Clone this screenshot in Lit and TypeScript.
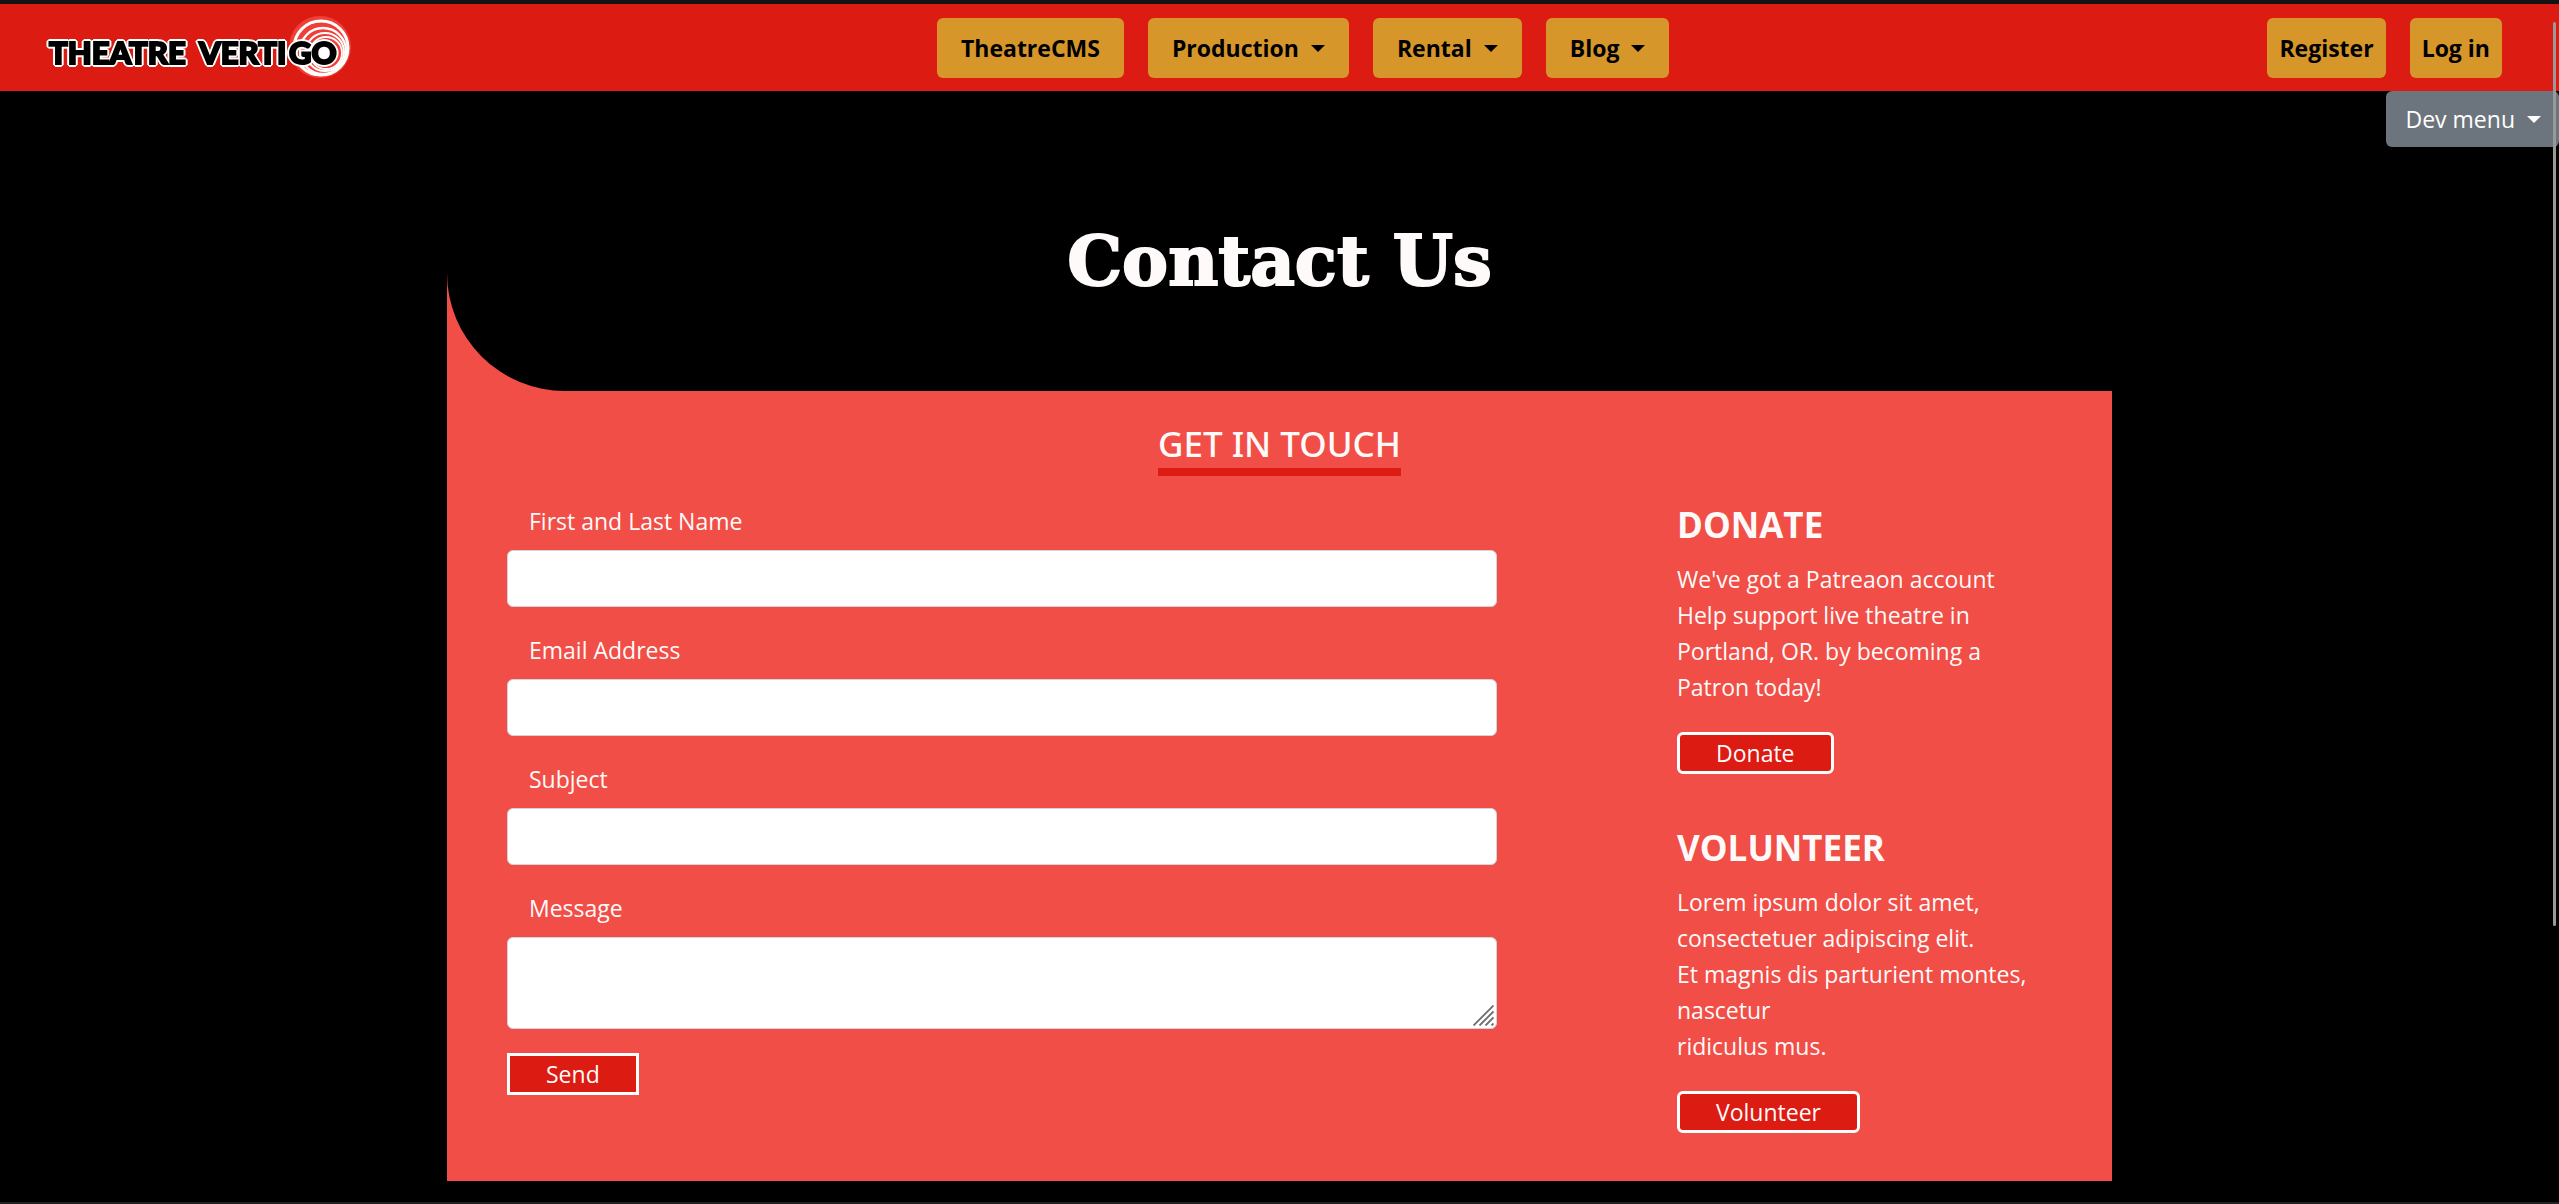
import { LitElement, html, css } from "lit";
import { customElement } from "lit/decorators.js";

const NAV_ITEMS = [
  { label: "TheatreCMS", menu: false },
  { label: "Production", menu: true },
  { label: "Rental", menu: true },
  { label: "Blog", menu: true },
];

const FIELDS = [
  { id: "name", label: "First and Last Name", type: "text" },
  { id: "email", label: "Email Address", type: "email" },
  { id: "subject", label: "Subject", type: "text" },
];

@customElement("theatre-logo")
export class TheatreLogo extends LitElement {
  static styles = css`
    :host {
      display: block;
      width: 291px;
      height: 60px;
    }
    .art {
      display: block;
      width: 304px;
      height: 60px;
      overflow: visible;
    }
    .word {
      font: 900 31px Lato, "Liberation Sans", sans-serif;
      fill: #000;
      stroke: #000;
      stroke-width: 2px;
      filter: drop-shadow(1px 1px 0 #fff) drop-shadow(-1px -1px 0 #fff) drop-shadow(1px -1px 0 #fff) drop-shadow(-1px 1px 0 #fff);
    }
  `;

  render() {
    return html`
      <svg class="art" viewBox="0 0 304 60" role="img" aria-label="Theatre Vertigo">
        <circle cx="272" cy="29" r="31" fill="#ef3f36" />
        <g fill="none" stroke="#fff">
          <circle cx="273" cy="30" r="27" stroke-width="3" />
          <circle cx="275" cy="33" r="23" stroke-width="2.4" />
          <circle cx="277" cy="34" r="19" stroke-width="2" />
          <circle cx="278" cy="35" r="16" stroke-width="1.8" />
        </g>
        <circle cx="279" cy="35" r="9" fill="#fff" />
        <text class="word" x="1" y="46">THEATRE</text>
        <text class="word" x="151" y="46">VERTI<tspan x="241">GO</tspan></text>
      </svg>
    `;
  }
}

@customElement("app-root")
export class AppRoot extends LitElement {
  static styles = css`
    :host {
      display: block;
      position: relative;
      box-sizing: border-box;
      min-height: 100vh;
      padding-bottom: 21px;
      border-top: 4px solid #131313;
      border-bottom: 2px solid #222;
      background: #000;
      color: #fffafa;
      font: 23px/36px "Open Sans", "Noto Sans", sans-serif;
    }
    * {
      box-sizing: border-box;
    }
    h1, h2, h3, p {
      margin: 0;
    }
    button, input, textarea {
      font: inherit;
      color: inherit;
      margin: 0;
    }
    button {
      cursor: pointer;
    }
    a {
      text-decoration: none;
      color: inherit;
    }
    .bar {
      display: flex;
      align-items: center;
      justify-content: space-between;
      padding: 14px 57px 13px 48px;
      background: #dc1b12;
    }
    .group {
      display: flex;
      gap: 24px;
    }
    .pill {
      display: flex;
      align-items: center;
      gap: 12px;
      height: 60px;
      padding: 0 24px;
      border: 0;
      border-radius: 6px;
      background: #d6962a;
      color: #000;
      font-weight: 700;
    }
    .tight {
      padding: 0 12px;
    }
    .caret {
      border: 7px solid transparent;
      border-top-color: currentColor;
      border-bottom: 0;
    }
    .dev {
      position: absolute;
      top: 87px;
      right: 0;
      display: flex;
      align-items: center;
      gap: 12px;
      height: 56px;
      padding: 0 18px 0 20px;
      border: 0;
      border-radius: 6px;
      background: #6c757d;
      color: #fff;
    }
    .thumb {
      position: absolute;
      top: 18px;
      right: 3px;
      width: 3px;
      height: 75.5%;
      border-radius: 2px;
      background: #999;
    }
    .card {
      max-width: 1665px;
      margin: 0 auto;
      background: #f04e46;
    }
    .hero {
      display: flex;
      justify-content: center;
      height: 300px;
      padding-top: 130px;
      border-bottom-left-radius: 118px;
      background: #000;
    }
    .title {
      font: 700 69px/80px "DejaVu Serif", serif;
      -webkit-text-stroke: 2px currentColor;
    }
    .body {
      padding: 31px 60px 48px;
    }
    .heading {
      display: block;
      width: fit-content;
      margin: 0 auto 27px;
      padding-bottom: 2px;
      border-bottom: 8px solid #dc1b12;
      font-size: 35px;
      line-height: 44px;
      font-weight: 500;
      font-family: "Noto Sans", "Open Sans", sans-serif;
    }
    .columns {
      display: grid;
      grid-template-columns: 66fr 25fr;
      gap: 180px;
    }
    .form {
      display: flex;
      flex-direction: column;
      align-items: flex-start;
    }
    .label {
      padding: 0 22px 11px;
    }
    .field {
      display: block;
      width: 100%;
      height: 57px;
      margin-bottom: 25px;
      padding: 9px 18px;
      border: 1px solid #ced4da;
      border-radius: 6px;
      background: #fff;
      color: #495057;
    }
    .wrap {
      position: relative;
      width: 100%;
      margin-bottom: 24px;
    }
    .area {
      height: 92px;
      margin-bottom: 0;
      resize: none;
    }
    .grip {
      position: absolute;
      right: 3px;
      bottom: 3px;
      width: 21px;
      height: 21px;
      pointer-events: none;
    }
    .action {
      display: flex;
      align-items: center;
      height: 42px;
      padding: 0 36px;
      border: 3px solid #fff;
      border-radius: 6px;
      background: #dc1b12;
    }
    .square {
      border-radius: 0;
    }
    .side {
      display: flex;
      flex-direction: column;
      gap: 52px;
    }
    .topic {
      display: flex;
      flex-direction: column;
      align-items: flex-start;
    }
    .topic-title {
      margin-bottom: 14px;
      font-size: 35px;
      line-height: 44px;
      font-weight: 700;
    }
    .text {
      margin-bottom: 27px;
    }
  `;

  render() {
    return html`
      <header class="bar">
        <a href="#home"><theatre-logo></theatre-logo></a>
        <nav class="group" aria-label="Main">
          ${NAV_ITEMS.map((item) =>
            item.menu
              ? html`<button class="pill" type="button" aria-haspopup="true">${item.label}<span class="caret"></span></button>`
              : html`<a class="pill" href="#cms">${item.label}</a>`
          )}
        </nav>
        <div class="group">
          <a class="pill tight" href="#register">Register</a>
          <a class="pill tight" href="#login">Log in</a>
        </div>
      </header>
      <button class="dev" type="button" aria-haspopup="true">Dev menu<span class="caret"></span></button>
      <main class="card">
        <div class="hero"><h1 class="title">Contact Us</h1></div>
        <div class="body">
          <h2 class="heading">GET IN TOUCH</h2>
          <div class="columns">
            <form class="form">
              ${FIELDS.map(
                (f) => html`
                  <label class="label" for=${f.id}>${f.label}</label>
                  <input class="field" id=${f.id} type=${f.type} />
                `
              )}
              <label class="label" for="message">Message</label>
              <div class="wrap">
                <textarea class="field area" id="message"></textarea>
                <svg class="grip" viewBox="0 0 21 21" aria-hidden="true">
                  <path d="M0.5 20.5 20.5 0.5M6.5 20.5 20.5 6.5M12.5 20.5 20.5 12.5M18.5 20.5 20.5 18.5" fill="none" stroke="#6e6e6e" stroke-width="1.8" />
                </svg>
              </div>
              <button class="action square" type="button">Send</button>
            </form>
            <aside class="side">
              <section class="topic">
                <h3 class="topic-title">DONATE</h3>
                <p class="text">
                  We've got a Patreaon account<br />Help support live theatre in<br />Portland, OR. by becoming a<br />Patron today!
                </p>
                <button class="action" type="button">Donate</button>
              </section>
              <section class="topic">
                <h3 class="topic-title">VOLUNTEER</h3>
                <p class="text">
                  Lorem ipsum dolor sit amet,<br />consectetuer adipiscing elit.<br />Et magnis dis parturient montes, nascetur<br />ridiculus mus.
                </p>
                <button class="action" type="button">Volunteer</button>
              </section>
            </aside>
          </div>
        </div>
      </main>
      <div class="thumb"></div>
    `;
  }
}
